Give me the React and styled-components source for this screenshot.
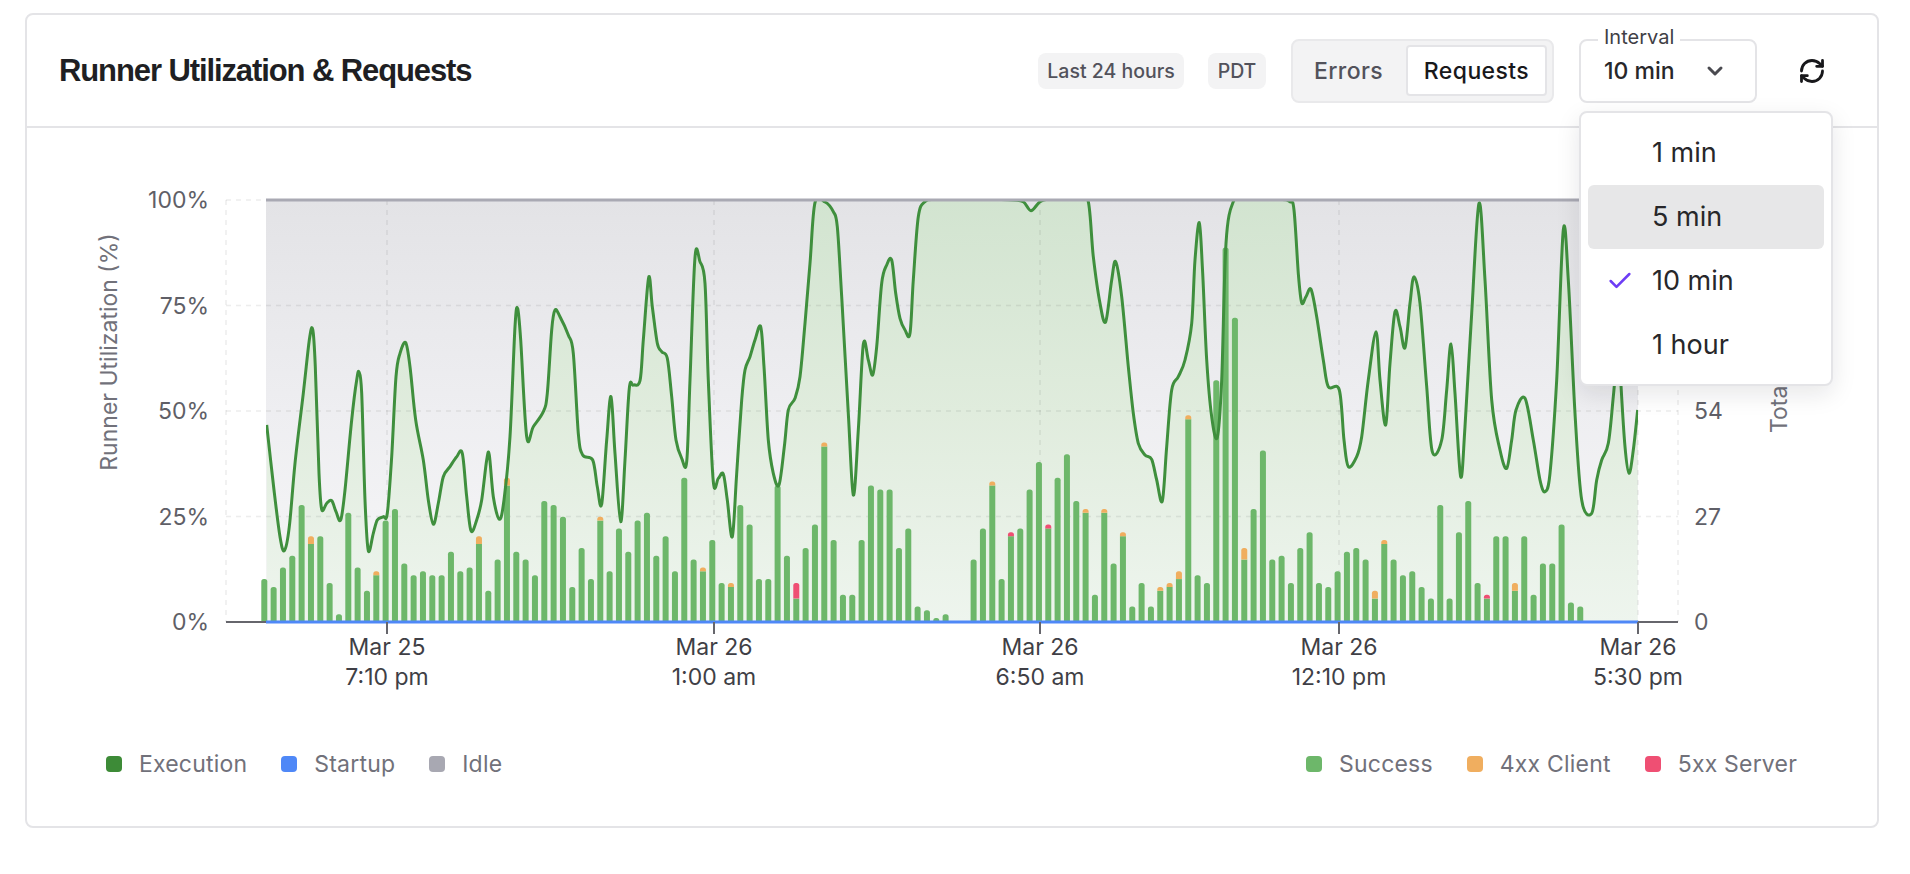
import React from 'react'
import styled, { createGlobalStyle } from 'styled-components'
import { Check, ChevronDown, RefreshCw } from 'lucide-react'

const GlobalStyle = createGlobalStyle`
  html, body {
    margin: 0;
    background: #ffffff;
    font-family: Inter, "Liberation Sans", sans-serif;
  }
`

// Styles
const Page = styled.div`
  padding: 13px 31px 0 25px;
`

const Card = styled.section`
  border: 2px solid #e4e4e7;
  border-radius: 8px;
  height: 811px;
  background: #fff;
`

const Header = styled.header`
  display: flex;
  align-items: center;
  height: 111px;
  padding: 0 51px 0 32px;
  border-bottom: 2px solid #e4e4e7;
`

const Title = styled.h2`
  flex: 1;
  margin: 0;
  font-family: "Liberation Sans", Arial, sans-serif;
  font-size: 31px;
  font-weight: 700;
  letter-spacing: -1.1px;
  color: #1f1f23;
`

const Chip = styled.span`
  display: flex;
  align-items: center;
  justify-content: center;
  width: ${props => props.$width}px;
  height: 36px;
  margin-right: ${props => props.$gap}px;
  border-radius: 8px;
  background: #f3f3f4;
  font-size: 19.5px;
  font-weight: 500;
  color: #52525b;
`

const Segment = styled.div`
  display: flex;
  align-items: center;
  justify-content: space-between;
  box-sizing: border-box;
  width: 263px;
  height: 64px;
  margin-right: 25px;
  padding: 0 5px 0 19px;
  border: 2px solid #e9e9eb;
  border-radius: 8px;
  background: #f3f3f4;
`

const SegmentTab = styled.div`
  display: flex;
  align-items: center;
  justify-content: center;
  box-sizing: border-box;
  width: ${props => props.$active ? '141px' : 'auto'};
  height: 51px;
  border: 2px solid ${props => props.$active ? '#e4e4e7' : 'transparent'};
  border-radius: 4px;
  background: ${props => props.$active ? '#fff' : 'transparent'};
  font-size: 23px;
  font-weight: 500;
  letter-spacing: 0.4px;
  color: ${props => props.$active ? '#18181b' : '#52525b'};
`

const Select = styled.div`
  position: relative;
  display: flex;
  align-items: center;
  box-sizing: border-box;
  width: 178px;
  height: 64px;
  margin-right: 41px;
  padding: 0 0 0 23px;
  border: 2px solid #e4e4e7;
  border-radius: 8px;
  font-size: 23px;
  font-weight: 500;
  color: #27272a;
`

const SelectLabel = styled.span`
  position: absolute;
  left: 17px;
  top: -15px;
  padding: 0 6px;
  background: #fff;
  font-size: 20px;
  line-height: 22px;
  font-weight: 400;
  color: #3f3f46;
`

const SelectValue = styled.span`
  flex: 1;
`

const Caret = styled(ChevronDown)`
  margin-right: 28px;
  color: #4a4a50;
`

const Menu = styled.ul`
  position: absolute;
  z-index: 2;
  left: -2px;
  top: 70px;
  box-sizing: border-box;
  width: 254px;
  margin: 0;
  padding: 8px 7px 7px;
  border: 2px solid #e4e4e7;
  border-radius: 8px;
  background: #fff;
  box-shadow: 0 8px 24px rgba(24, 24, 27, 0.1);
  list-style: none;
`

const MenuItem = styled.li`
  display: flex;
  align-items: center;
  height: 64px;
  padding-left: 18px;
  border-radius: 6px;
  background: ${props => props.$hover ? '#e7e7e8' : 'transparent'};
  font-size: 27px;
  font-weight: 400;
  color: #27272a;
`

const MenuCheck = styled.span`
  display: flex;
  width: 46px;
  color: #6d3df5;
`

const Refresh = styled(RefreshCw)`
  color: #18181b;
`

const ChartBox = styled.svg`
  display: block;
  width: 1850px;
  height: 591px;
`

const AxisText = styled.text`
  font-size: 23px;
  fill: ${props => props.$color || '#5f5f67'};
  font-family: Inter, "Liberation Sans", sans-serif;
`

const Legends = styled.div`
  display: flex;
  justify-content: space-between;
  align-items: center;
  height: 24px;
  padding: 33px 80px 0 79px;
`

const LegendGroup = styled.div`
  display: flex;
  gap: 34px;
`

const LegendItem = styled.div`
  display: flex;
  align-items: center;
  gap: 17px;
  font-size: 23px;
  letter-spacing: 0.2px;
  color: #71717a;
`

const Swatch = styled.i`
  width: 16px;
  height: 16px;
  border-radius: 4px;
  background: ${props => props.$color};
`

// Data, one entry per 10 min: [success, 4xx, 5xx]
const GREEN = '#6db76a'
const ORANGE = '#f0ae5f'
const RED = '#ef4f73'
const requests = [
  11, 9, 14, 17, 30, [20, 2], 22, 10, 2, 28, 14, 8, [12, 1], 26, 29, 15, 12, 13, 12, 12, 18, 13, 14, [20, 2], 8, 16,
  [35, 2], 18, 16, 12, 31, 30, 27, 9, 19, 11, [26, 1], 13, 24, 18, 26, 28, 17, 22, 13, 37, 16, [13, 1], 21, 10, [9, 1],
  30, 25, 11, 11, 35, 17, [6, 0, 4], 19, 25, [45, 1], 21, 7, 7, 21, 35, 34, 34, 19, 24, 4, 3, 1, 2, 0, 0, 16, 24,
  [35, 1], 11, [22, 0, 1], 24, 34, 41, [24, 0, 1], 37, 43, 31, [28, 1], 7, [28, 1], 15, [22, 1], 4, 10, 4, [8, 1], [9, 1],
  [11, 2], [52, 1], 12, 10, 62, 96, 78, [16, 3], 29, 44, 16, 17, 10, 19, 23, 10, 9, 13, 18, 19, 16, [6, 2], [20, 1], 16,
  12, 13, 9, 6, 30, 6, 23, 31, 10, [6, 0, 1], 22, 22, [8, 2], 22, 7, 15, 15, 25, 5, 4,
]

// Execution curve, traced in 3x zoom units from the given page origin
const trace = (originX, pts) => {
  const out = []
  for (let i = 0; i < pts.length; i += 2) out.push([originX + pts[i] / 3, 180 + pts[i + 1] / 3])
  return out
}
const execution = [
  ...trace(250, [50,735, 72,930, 90,1070, 103,1112, 118,1040, 135,850, 160,640, 178,480, 188,448, 196,560, 207,880, 215,988, 230,970, 245,962, 258,995, 272,1020, 285,930, 305,720, 320,600, 327,576, 335,640, 345,960, 355,1112, 370,1060, 382,1020, 400,1010, 412,1000, 425,830, 438,590, 450,520, 467,488, 480,560, 497,720, 520,840, 535,960, 550,1033, 565,970, 580,890, 600,860, 620,830, 637,820, 650,950, 663,1052, 680,1020, 695,960, 710,840, 718,825, 730,950, 748,1018, 762,960, 780,770, 795,440, 803,386, 812,480, 830,770, 850,740, 880,695, 892,640, 905,450, 915,390, 930,410, 955,465, 970,520, 985,760, 998,825, 1028,840, 1042,920, 1055,973, 1070,780, 1083,650, 1095,820, 1112,1025, 1125,840, 1138,625, 1150,615, 1170,602, 1180,480, 1196,292, 1207,380, 1222,490, 1235,515, 1252,535, 1265,650, 1278,780, 1295,835, 1310,845, 1320,600, 1335,232, 1350,245, 1365,310, 1375,600, 1390,905, 1405,895, 1420,882, 1432,960, 1447,1070, 1460,880, 1475,660, 1485,570]),
  ...trace(750, [0,530, 15,480, 32,440, 42,560, 55,780, 70,880, 87,915, 103,800, 115,690, 135,655, 150,590, 165,430, 180,250, 195,68, 225,66, 250,95, 262,140, 275,350, 295,700, 310,945, 325,750, 340,493, 355,540, 368,585, 380,500, 395,310, 410,255, 425,240, 437,340, 450,415, 465,450, 480,460, 490,300, 505,110, 525,65, 560,58, 700,58, 790,60, 820,65, 843,92, 870,65, 900,58, 990,58, 1015,65, 1030,230, 1050,370, 1067,425, 1085,300, 1097,245, 1115,350, 1135,560, 1150,700, 1165,790, 1185,825, 1205,838, 1220,900, 1237,963, 1250,800, 1265,630, 1285,590, 1305,540, 1325,430, 1335,240]),
  ...trace(1200, [-2,128, 8,280, 20,540, 35,710, 52,772, 65,600, 78,190, 100,65, 130,58, 240,58, 270,65, 282,90, 295,280, 305,368, 318,350, 333,328, 350,410, 370,540, 385,620, 418,630, 432,780, 445,860, 470,830, 485,770, 505,600, 528,455, 540,600, 557,735, 570,550, 585,395, 600,440, 615,503, 630,370, 642,290, 660,370, 680,620, 697,815, 725,780, 740,630, 753,492, 765,640, 782,890, 795,740, 815,400, 837,70, 855,300, 875,660, 900,810, 920,865, 935,780, 948,690, 975,655, 1000,780, 1020,900, 1035,935, 1050,880, 1070,600, 1090,150, 1105,300, 1125,700, 1145,960, 1175,1000, 1190,900, 1205,840, 1225,790, 1240,650, 1256,480, 1262,600, 1275,800, 1287,880, 1300,810, 1313,690]),
]

// Catmull-Rom through the points
const smooth = pts => {
  let d = `M${pts[0][0].toFixed(1)} ${pts[0][1].toFixed(1)}`
  for (let i = 0; i < pts.length - 1; i++) {
    const p0 = pts[i - 1] || pts[i]
    const p1 = pts[i]
    const p2 = pts[i + 1]
    const p3 = pts[i + 2] || p2
    const c1x = p1[0] + (p2[0] - p0[0]) / 6
    const c1y = p1[1] + (p2[1] - p0[1]) / 6
    const c2x = p2[0] - (p3[0] - p1[0]) / 6
    const c2y = p2[1] - (p3[1] - p1[1]) / 6
    d += `C${c1x.toFixed(1)} ${c1y.toFixed(1)} ${c2x.toFixed(1)} ${c2y.toFixed(1)} ${p2[0].toFixed(1)} ${p2[1].toFixed(1)}`
  }
  return d
}

// Plot frame in page coordinates
const PLOT = { left: 266, right: 1638, top: 200, bottom: 622, gridLeft: 226, gridRight: 1678 }
const UNIT = 3.9
const GRID = 'rgba(24, 24, 27, 0.08)'
const yTicks = [
  { y: 200, left: '100%' },
  { y: 305.5, left: '75%' },
  { y: 411, left: '50%', right: '54' },
  { y: 516.5, left: '25%', right: '27' },
  { y: 622, left: '0%', right: '0' },
]
const xTicks = [
  { x: 387, date: 'Mar 25', time: '7:10 pm' },
  { x: 714, date: 'Mar 26', time: '1:00 am' },
  { x: 1040, date: 'Mar 26', time: '6:50 am' },
  { x: 1339, date: 'Mar 26', time: '12:10 pm' },
  { x: 1638, date: 'Mar 26', time: '5:30 pm' },
]

const topRounded = (x, y, w, h) => {
  const r = Math.min(2.5, h)
  return `M${x} ${y + h}V${y + r}Q${x} ${y} ${x + r} ${y}H${x + w - r}Q${x + w} ${y} ${x + w} ${y + r}V${y + h}Z`
}

const RequestBar = ({ index, value }) => {
  const [ok, client = 0, server = 0] = Array.isArray(value) ? value : [value]
  if (!ok) return null
  const width = 6
  const x = 264.3 + index * 9.333 - width / 2
  const parts = [[ok, GREEN], [client, ORANGE], [server, RED]].filter(part => part[0] > 0)
  let y = PLOT.bottom
  return parts.map(([count, color], i) => {
    const h = count * UNIT
    y -= h
    const d = i === parts.length - 1 ? topRounded(x, y, width, h) : `M${x} ${y}h${width}v${h}h${-width}Z`
    return <path key={color} d={d} fill={color} />
  })
}

const Chart = () => {
  const line = smooth(execution)
  const last = execution[execution.length - 1]
  const area = `${line}L${last[0]} ${PLOT.bottom}L${execution[0][0]} ${PLOT.bottom}Z`
  return (
    <ChartBox viewBox="27 128 1850 591">
      <defs>
        <linearGradient id="idle" gradientUnits="userSpaceOnUse" x1="0" y1={PLOT.top} x2="0" y2={PLOT.bottom}>
          <stop offset="0" stopColor="#e3e3e6" />
          <stop offset="0.5" stopColor="#eeeef1" />
          <stop offset="1" stopColor="#f7f7f8" />
        </linearGradient>
        <linearGradient id="exec" gradientUnits="userSpaceOnUse" x1="0" y1={PLOT.top} x2="0" y2={PLOT.bottom}>
          <stop offset="0" stopColor="#d2e4d0" />
          <stop offset="0.5" stopColor="#e0ecdd" />
          <stop offset="1" stopColor="#eef5ee" />
        </linearGradient>
        <clipPath id="plot">
          <rect x={PLOT.left} y={PLOT.top} width={PLOT.right - PLOT.left} height={PLOT.bottom - PLOT.top} />
        </clipPath>
      </defs>

      <rect x={PLOT.left} y={PLOT.top} width={PLOT.right - PLOT.left} height={PLOT.bottom - PLOT.top} fill="url(#idle)" />
      <path d={area} fill="url(#exec)" clipPath="url(#plot)" />

      {yTicks.map(tick => (
        <line key={tick.y} x1={PLOT.gridLeft} x2={PLOT.gridRight} y1={tick.y} y2={tick.y} stroke={GRID} strokeWidth="1.5" strokeDasharray="5 5" />
      ))}
      {[PLOT.gridLeft, ...xTicks.map(tick => tick.x), PLOT.gridRight].map(x => (
        <line key={x} x1={x} x2={x} y1={PLOT.top} y2={PLOT.bottom} stroke={GRID} strokeWidth="1.5" strokeDasharray="5 5" />
      ))}

      {requests.map((value, i) => <RequestBar key={i} index={i} value={value} />)}
      <path d={line} fill="none" stroke="#3f8f3d" strokeWidth="3" clipPath="url(#plot)" />

      <line x1={PLOT.left} x2={PLOT.right} y1={PLOT.top} y2={PLOT.top} stroke="#a9a9b3" strokeWidth="3" />
      <line x1={PLOT.gridLeft} x2={PLOT.gridRight} y1={PLOT.bottom} y2={PLOT.bottom} stroke="#66666c" strokeWidth="2" />
      <line x1={PLOT.left} x2={PLOT.right} y1={PLOT.bottom} y2={PLOT.bottom} stroke="#4f88f7" strokeWidth="3" />

      {yTicks.map(tick => (
        <g key={tick.y}>
          <AxisText x="209" y={tick.y + 8} textAnchor="end">{tick.left}</AxisText>
          {tick.right && <AxisText x="1694" y={tick.y + 8}>{tick.right}</AxisText>}
        </g>
      ))}
      {xTicks.map(tick => (
        <g key={tick.x}>
          <line x1={tick.x} x2={tick.x} y1={PLOT.bottom} y2="634" stroke="#66666c" strokeWidth="2" />
          <AxisText $color="#3f3f46" x={tick.x} y="655" textAnchor="middle">{tick.date}</AxisText>
          <AxisText $color="#3f3f46" x={tick.x} y="685" textAnchor="middle">{tick.time}</AxisText>
        </g>
      ))}
      <AxisText $color="#71717a" transform="translate(117 352) rotate(-90)" textAnchor="middle">Runner Utilization (%)</AxisText>
      <AxisText $color="#71717a" transform="translate(1787 433) rotate(-90)">Total Requests</AxisText>
    </ChartBox>
  )
}

const LEFT_LEGEND = [['Execution', '#3d8b37'], ['Startup', '#4f88f7'], ['Idle', '#a8a8b2']]
const RIGHT_LEGEND = [['Success', GREEN], ['4xx Client', ORANGE], ['5xx Server', RED]]
const INTERVALS = ['1 min', '5 min', '10 min', '1 hour']

const Legend = ({ items }) => (
  <LegendGroup>
    {items.map(([label, color]) => (
      <LegendItem key={label}>
        <Swatch $color={color} />
        {label}
      </LegendItem>
    ))}
  </LegendGroup>
)

const App = () => (
  <Page>
    <GlobalStyle />
    <Card>
      <Header>
        <Title>Runner Utilization &amp; Requests</Title>
        <Chip $width={146} $gap={24}>Last 24 hours</Chip>
        <Chip $width={58} $gap={25}>PDT</Chip>
        <Segment>
          <SegmentTab>Errors</SegmentTab>
          <SegmentTab $active>Requests</SegmentTab>
        </Segment>
        <Select>
          <SelectLabel>Interval</SelectLabel>
          <SelectValue>10 min</SelectValue>
          <Caret size={24} strokeWidth={3} />
          <Menu>
            {INTERVALS.map(option => (
              <MenuItem key={option} $hover={option === '5 min'}>
                <MenuCheck>{option === '10 min' && <Check size={28} strokeWidth={2.2} />}</MenuCheck>
                {option}
              </MenuItem>
            ))}
          </Menu>
        </Select>
        <Refresh size={28} strokeWidth={2.4} />
      </Header>
      <Chart />
      <Legends>
        <Legend items={LEFT_LEGEND} />
        <Legend items={RIGHT_LEGEND} />
      </Legends>
    </Card>
  </Page>
)

export default App
